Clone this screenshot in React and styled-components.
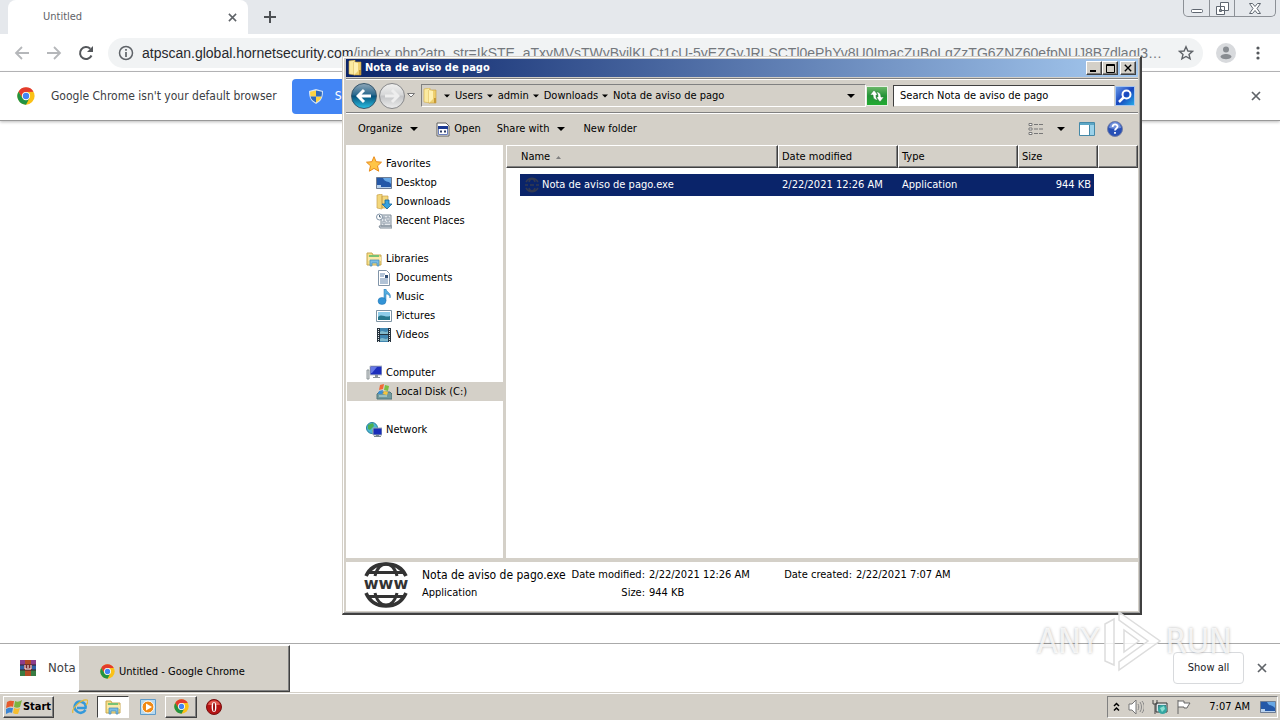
import React from 'react'
import styled, { createGlobalStyle } from 'styled-components'

const GlobalStyle = createGlobalStyle`
    * {
        box-sizing: border-box;
    }

    body {
        margin: 0;
        overflow: hidden;
        font-family: "DejaVu Sans Condensed", "Noto Sans", sans-serif;
        font-size: 11px;
        line-height: 14px;
        color: #000;
    }

    button, input {
        font: inherit;
        color: inherit;
        padding: 0;
        border: 0;
        background: none;
        outline: none;
        min-width: 0;
    }

    button {
        display: flex;
        align-items: center;
        justify-content: center;
        flex-shrink: 0;
    }

    svg {
        display: block;
        flex-shrink: 0;
    }
`;

const Desktop = styled.main`
    position: relative;
    display: flex;
    flex-direction: column;
    height: 100vh;
    background: #fff;
`;

/* ---------- browser ---------- */

const TabStrip = styled.header`
    display: flex;
    align-items: flex-end;
    height: 34px;
    padding-left: 8px;
    background: #e5e8ec;
`;

const Tab = styled.div`
    display: flex;
    align-items: center;
    justify-content: space-between;
    width: 240px;
    height: 34px;
    padding: 0 10px 0 35px;
    border-radius: 8px 8px 0 0;
    background: #fff;
    color: #5f6368;
`;

const NewTab = styled.button`
    width: 44px;
    height: 34px;
`;

const WindowControls = styled.div`
    display: flex;
    align-self: flex-start;
    height: 17px;
    margin: 0 4px 0 auto;
    border: 1px solid #8c9096;
    border-top: 0;
    border-radius: 0 0 5px 5px;
`;

const WindowControl = styled.button`
    width: ${props => props.$width}px;
    height: 16px;

    & + & {
        border-left: 1px solid #8c9096;
    }
`;

const Toolbar = styled.nav`
    display: flex;
    align-items: center;
    height: 38px;
    padding: 0 6px;
    border-bottom: 1px solid #b0b0b3;
`;

const ToolbarButton = styled.button`
    width: 32px;
    height: 32px;
`;

const AddressBar = styled.label`
    display: flex;
    flex: 1;
    align-items: center;
    height: 30px;
    margin: 0 7px 0 6px;
    padding: 0 9px 0 10px;
    border-radius: 15px;
    background: #f1f3f4;
    font-family: "Liberation Sans", sans-serif;
    font-size: 14px;
    line-height: 20px;
    color: #27292d;
`;

const Host = styled.span`
    padding-left: 8px;
`;

const UrlInput = styled.input`
    flex: 1;
    height: 24px;
    margin-right: 15px;
    color: #74787d;
    text-overflow: ellipsis;
`;

const InfoBar = styled.section`
    display: flex;
    align-items: center;
    height: 49px;
    padding: 0 18px 0 17px;
    border-bottom: 1px solid #999;
    box-shadow: 0 1px 3px #bbb;
    font-size: 12px;
    color: #3c4043;
`;

const InfoText = styled.span`
    padding: 0 15px 0 16px;
`;

const DefaultButton = styled.button`
    gap: 12px;
    height: 35px;
    padding: 0 17px;
    border-radius: 4px;
    background: #4285f4;
    color: #fff;
`;

const CloseButton = styled.button`
    width: 12px;
    height: 16px;
    margin-left: ${props => props.$push ? 'auto' : '0'};
`;

const Page = styled.div`
    flex: 1;
`;

const Shelf = styled.footer`
    display: flex;
    align-items: center;
    height: 49px;
    padding: 0 12px 0 20px;
    border-top: 1px solid #aaa;
    font-size: 13px;
    color: #3c4043;
`;

const Download = styled.button`
    gap: 12px;
`;

const ShowAll = styled.button`
    width: 71px;
    height: 32px;
    margin: 0 12px 0 auto;
    border: 1px solid #d8dadd;
    border-radius: 4px;
    font-size: 11px;
    color: #202124;
`;

/* ---------- explorer ---------- */

const Window = styled.section`
    position: absolute;
    left: 342px;
    top: 56px;
    display: flex;
    flex-direction: column;
    width: 800px;
    height: 559px;
    padding: 2px 2px 2px 3px;
    border: 1px solid #d4d0c8;
    border-right: 2px solid #404040;
    border-bottom: 2px solid #404040;
    background: #d4d0c8;
    box-shadow: inset 1px 1px #fff, inset -1px -1px #a0a0a0;
`;

const TitleBar = styled.header`
    display: flex;
    align-items: center;
    height: 18px;
    padding: 0 2px 0 1px;
    background: linear-gradient(to right, #0a246a, #a6caf0);
    color: #fff;
`;

const Title = styled.h1`
    flex: 1;
    margin: 0;
    padding-left: 2px;
    font-size: 11px;
    line-height: 14px;
    font-weight: bold;
`;

const CaptionButton = styled.button`
    width: 16px;
    height: 14px;
    margin-left: ${props => props.$gap ? '2px' : '0'};
    border: 1px solid;
    border-color: #fff #404040 #404040 #fff;
    background: #d4d0c8;
    box-shadow: inset -1px -1px #808080;
`;

const NavRow = styled.nav`
    display: flex;
    align-items: center;
    height: 35px;
    margin-top: 1px;
    border-top: 1px solid #808080;
    border-bottom: 1px solid #808080;
    box-shadow: inset 0 1px #fff, 0 1px #fff;
`;

const RoundButton = styled.button`
    width: 26px;
    height: 26px;
    margin-left: ${props => props.$active ? 5 : 2}px;
    border: 1px solid ${props => props.$active ? '#36566b' : '#87888a'};
    border-radius: 50%;
    background: ${props => props.$active
        ? 'linear-gradient(#8ba5b7, #28678c 46%, #075079 50%, #29bce0)'
        : 'linear-gradient(#f0f0ef, #d6d7d8 46%, #c2c3c5 50%, #ececec)'};
`;

const HistoryButton = styled.button`
    width: 12px;
    height: 20px;
`;

const Path = styled.div`
    display: flex;
    flex: 1;
    align-items: center;
    height: 23px;
    margin-left: 4px;
    padding-right: 10px;
    border: 1px solid;
    border-color: #808080 #fff #fff #808080;
`;

const Crumbs = styled.div`
    display: flex;
    flex: 1;
    gap: 4px;
    padding-left: 6px;
`;

const Crumb = styled.button`
    gap: 5px;
`;

const Spacer = styled.span`
    flex: 1;
`;

const GoButton = styled.button`
    width: 22px;
    height: 20px;
    margin-right: 5px;
    border: 1px solid #e7efe3;
    background: linear-gradient(#6ab668, #249437 50%, #22ab32);
`;

const SearchInput = styled.input`
    width: 222px;
    height: 22px;
    padding: 0 6px;
    border: 1px solid;
    border-color: #404040 #d4d0c8 #d4d0c8 #404040;
    background: #fff;

    &::placeholder {
        color: #000;
        opacity: 1;
    }
`;

const SearchButton = styled.button`
    width: 20px;
    height: 20px;
    margin-right: 3px;
    border: 1px solid #a7c5ed;
    background: linear-gradient(135deg, #6698e8, #1745bd 50%, #25a9e6);
`;

const CommandBar = styled.div`
    display: flex;
    align-items: center;
    height: 32px;
    padding: 0 15px 0 12px;
`;

const Command = styled.button`
    gap: ${props => props.$gap || 8}px;
    margin-right: ${props => props.$after || 0}px;
`;

const Panes = styled.div`
    display: flex;
    flex: 1;
    min-height: 0;
`;

const Sidebar = styled.aside`
    width: 157px;
    padding: 9px 0 0 1px;
    background: #fff;
`;

const Group = styled.ul`
    margin: 0 0 19px;
    padding: 0;
    list-style: none;
`;

const PlaceLink = styled.a`
    display: flex;
    align-items: center;
    gap: 4px;
    height: 19px;
    padding-left: ${props => props.$nested ? 29 : 19}px;
    background: ${props => props.$selected ? '#d4d0c8' : 'transparent'};
    color: #000;
    text-decoration: none;
`;

const FileList = styled.div`
    flex: 1;
    margin-left: 3px;
    background: #fff;
`;

const FileTable = styled.table`
    width: 100%;
    table-layout: fixed;
    border-spacing: 0;
`;

const HeadCell = styled.th`
    width: ${props => props.$width ? props.$width + 'px' : 'auto'};
    height: 23px;
    padding: 1px 0 0 ${props => props.$first ? 14 : 3}px;
    border: 1px solid;
    border-color: #fff #404040 #404040 #fff;
    background: #d4d0c8;
    box-shadow: inset -1px -1px #808080;
    font-weight: normal;
    text-align: left;
`;

const HeadLabel = styled.span`
    display: flex;
    align-items: center;
    gap: 6px;
`;

const FileCell = styled.td`
    padding: 6px ${props => props.$last ? 4 : 0}px 0 ${props => props.$first ? 14 : 0}px;
`;

const CellFill = styled.div`
    display: flex;
    align-items: center;
    justify-content: ${props => props.$right ? 'flex-end' : 'flex-start'};
    gap: 2px;
    height: 22px;
    padding: 0 ${props => props.$right ? 3 : 0}px 0 4px;
    background: #0a246a;
    color: #fff;
`;

const Details = styled.footer`
    display: flex;
    align-items: flex-start;
    gap: 13px;
    height: 49px;
    margin-top: 4px;
    padding-left: 17px;
    background: #fff;
`;

const Facts = styled.dl`
    display: grid;
    flex: 1;
    grid-template-columns: 145px 74px 131px 68px 1fr;
    gap: 4px;
    margin: 6px 0 0;
`;

const FactLabel = styled.dt`
    text-align: right;
    white-space: nowrap;
`;

const Fact = styled.dd`
    margin: 0;
    font-size: ${props => props.$large ? 12 : 11}px;
    white-space: nowrap;
`;

/* ---------- taskbar ---------- */

const Taskbar = styled.footer`
    position: relative;
    display: flex;
    align-items: center;
    height: 28px;
    padding: 0 2px 0 3px;
    border-top: 1px solid #d4d0c8;
    background: #d4d0c8;
    box-shadow: inset 0 1px #fff;
`;

const TaskButton = styled.button`
    gap: 1px;
    width: ${props => props.$width}px;
    height: 22px;
    margin-right: ${props => props.$after || 0}px;
    border: 1px solid;
    border-color: ${props => props.$pressed ? '#404040 #fff #fff #404040' : '#fff #404040 #404040 #fff'};
    background: ${props => props.$pressed ? '#fff' : '#d4d0c8'};
    box-shadow: ${props => props.$pressed ? 'none' : 'inset -1px -1px #808080'};
    font-weight: bold;
`;

const QuickButton = styled.button`
    width: 34px;
    height: 22px;
`;

const Tray = styled.div`
    display: flex;
    align-items: center;
    gap: 8px;
    height: 22px;
    margin-left: auto;
    padding: 0 1px 0 5px;
    border: 1px solid;
    border-color: #808080 #fff #fff #808080;
`;

const Clock = styled.time`
    padding: 0 2px 0 9px;
`;

const TaskPreview = styled.button`
    position: absolute;
    left: 78px;
    bottom: 28px;
    gap: 4px;
    justify-content: flex-start;
    width: 212px;
    height: 47px;
    padding: 6px 0 0 21px;
    border: 1px solid;
    border-color: #fff #404040 #404040 #fff;
    background: #d4d0c8;
    box-shadow: inset -1px -1px #808080;
`;

const Watermark = styled.div`
    position: absolute;
    right: 48px;
    bottom: 48px;
    display: flex;
    align-items: center;
    gap: 4px;
    font-size: 34px;
    line-height: 32px;
    color: rgba(255, 255, 255, 0.8);
    text-shadow: 0 0 3px rgba(0, 0, 0, 0.3);
    pointer-events: none;
`;

/* ---------- icons ---------- */

const Cross = ({ size = 10, color = '#5f6368' }) => (
    <svg width={size} height={size} viewBox="0 0 10 10" stroke={color} strokeWidth="1.7">
        <path d="M1 1l8 8M9 1l-8 8" />
    </svg>
)

const Caret = ({ size = 8 }) => (
    <svg width={size} height="4" viewBox="0 0 8 4"><path d="M0 0h8L4 4z" /></svg>
)

const ChromeIcon = ({ size = 16 }) => (
    <svg width={size} height={size} viewBox="0 0 48 48">
        <circle cx="24" cy="24" r="23" fill="#fbc116" />
        <path d="M4 12.500A23 23 0 0 1 44 12.500L24 13A11 11 0 0 0 14.500 29.500z" fill="#e33b2e" />
        <path d="M4 12.500A23 23 0 0 0 24 47L33.500 29.500A11 11 0 0 1 14.500 29.500z" fill="#229342" />
        <circle cx="24" cy="24" r="11" fill="#fff" />
        <circle cx="24" cy="24" r="8.500" fill="#4285f4" />
    </svg>
)

const ArrowIcon = ({ right, color = '#b5b7ba', size = 16, width = 1.8 }) => (
    <svg width={size} height={size} viewBox="0 0 16 16" fill="none" stroke={color} strokeWidth={width}>
        <path d={right ? 'M1 8h13M8 2l6 6-6 6' : 'M15 8H2M8 2L2 8l6 6'} />
    </svg>
)

const ReloadIcon = () => (
    <svg width="16" height="16" viewBox="0 0 16 16">
        <path d="M13.500 10.500A6 6 0 1 1 12.300 3.800" fill="none" stroke="#54575b" strokeWidth="2" />
        <path d="M15 1v6H9z" fill="#54575b" />
    </svg>
)

const InfoIcon = () => (
    <svg width="16" height="16" viewBox="0 0 16 16" fill="none" stroke="#5f6368" strokeWidth="1.500">
        <circle cx="8" cy="8" r="6.500" />
        <path d="M8 7v5M8 4v1.700" strokeWidth="1.700" />
    </svg>
)

const StarIcon = () => (
    <svg width="16" height="16" viewBox="0 0 16 16" fill="none" stroke="#5f6368" strokeWidth="1.400">
        <path d="M8 1.800l1.900 4.200 4.600.4-3.500 3 1.100 4.500L8 11.500l-4.100 2.400L5 9.400l-3.500-3L6.100 6z" />
    </svg>
)

const ProfileIcon = () => (
    <svg width="20" height="20" viewBox="0 0 20 20">
        <circle cx="10" cy="10" r="10" fill="#d8dadd" />
        <circle cx="10" cy="6.500" r="3" fill="#888c91" />
        <path d="M4.500 14c0-4 11-4 11 0-2 3-9 3-11 0z" fill="#888c91" />
    </svg>
)

const DotsIcon = () => (
    <svg width="4" height="14" viewBox="0 0 4 14" fill="#55585c">
        <circle cx="2" cy="2" r="1.600" /><circle cx="2" cy="7" r="1.600" /><circle cx="2" cy="12" r="1.600" />
    </svg>
)

const ShieldIcon = () => (
    <svg width="14" height="15" viewBox="0 0 14 15">
        <path d="M7 0l7 2c0 7-2 10-7 13C2 12 0 9 0 2z" fill="#d5e5f5" />
        <path d="M7 1.500v6H1.500c-.4-1.500-.4-3-.4-4.700zM7 7.500h5.500c-.7 2.700-2.500 4.600-5.500 6z" fill="#fdd344" />
        <path d="M7 1.500l5.900 1.300c0 1.700 0 3.200-.4 4.700H7zM1.500 7.500H7v6c-3-1.400-4.800-3.300-5.500-6z" fill="#2e69bd" />
    </svg>
)

const FolderIcon = () => (
    <svg width="16" height="16" viewBox="0 0 16 16">
        <path d="M2 1l6-1v15l-6-1z" fill="#fbeaa0" stroke="#d4ad45" strokeWidth=".6" />
        <path d="M7 2h7v13H7z" fill="#eed070" stroke="#c69a38" strokeWidth=".6" />
        <path d="M7 2l4 1v8l-4 4z" fill="#fff1b3" /><path d="M12 10h2v5h-2z" fill="#c89a36" />
    </svg>
)

const OpenIcon = () => (
    <svg width="14" height="15" viewBox="0 0 14 15">
        <path d="M1 1h9l3 3v10H1z" fill="#fff" stroke="#606060" />
        <path d="M2.500 4.500h9v8h-9z" fill="#fff" stroke="#6a7fbc" /><path d="M2 4h10v3H2z" fill="#1b3992" />
        <path d="M4 9.500h2m2 0h2M5 8v3M9 8v3" stroke="#303e68" />
    </svg>
)

const RefreshIcon = () => (
    <svg width="18" height="16" viewBox="0 0 18 16" fill="#fff">
        <path d="M6 2l4 5H8c0 3 1 4 2 5-4 0-5-2-5-5H2zM12 14L8 9h2c0-3-1-4-2-5 4 0 5 2 5 5h3z" stroke="#287c37" strokeWidth=".6" />
    </svg>
)

const SearchIcon = () => (
    <svg width="16" height="16" viewBox="0 0 16 16" fill="none" stroke="#fff" strokeWidth="2">
        <circle cx="9.500" cy="6.500" r="4" /><path d="M6.500 9.500L2 14" strokeWidth="2.500" />
    </svg>
)

const ViewIcon = () => (
    <svg width="16" height="14" viewBox="0 0 16 14" stroke="#777">
        <path d="M1 1.500h3v2H1zM1 6h3v2H1zM1 10.500h3v2H1z" fill="#fff" />
        <path d="M6 2.500h4m1 0h4M6 7h4m1 0h4M6 11.500h4m1 0h4" />
    </svg>
)

const PaneIcon = () => (
    <svg width="16" height="14" viewBox="0 0 16 14">
        <path d="M.5.500h15v13H.5z" fill="#fff" stroke="#4589a8" /><path d="M1 1h14v2H1z" fill="#5ca6c5" />
        <path d="M10.500 3v10" stroke="#4589a8" /><path d="M11 3h4v10h-4z" fill="#9bd2ea" />
    </svg>
)

const HelpIcon = () => (
    <svg width="16" height="16" viewBox="0 0 16 16">
        <circle cx="8" cy="8" r="7.500" fill="#2850b6" stroke="#7580a5" />
        <path d="M2 7a6 6 0 0 1 12 0C10 8 6 8 2 7z" fill="#7291db" />
        <path d="M5.600 6c0-3.400 5-3.200 5-.4C10.600 7.500 8 7.500 8 9.500M8 11v1.800" fill="none" stroke="#fff" strokeWidth="1.800" />
    </svg>
)

const GlobeIcon = () => (
    <svg width="46" height="46" viewBox="0 0 46 46" fill="none" stroke="#333" strokeWidth="3">
        <path d="M3 14C7 5 14 2 23 2s16 3 20 12M3 31c4 9 11 13 20 13s16-4 20-13" strokeWidth="3.600" />
        <path d="M12 14c2-8 6-12 11-12s9 4 11 12M12 31c2 8 6 12 11 12s9-4 11-12" />
        <path d="M6 10.500h34M5 34.500h36" />
        <text x="23" y="27" textAnchor="middle" fontFamily="DejaVu Sans" fontWeight="bold" fontSize="16" fill="#333" stroke="none">www</text>
    </svg>
)

const SmallGlobeIcon = () => (
    <svg width="16" height="16" viewBox="0 0 16 16" fill="none" stroke="#333a50" strokeWidth="1.500">
        <path d="M2 5c3-5 9-5 12 0M2 11c3 5 9 5 12 0M5 5c1-4 5-4 6 0M5 11c1 4 5 4 6 0M1 8h3m2 0h4m2 0h3" />
    </svg>
)

const icons = {
    star: <path d="M8 .7l2.100 5 5.400.5-4 3.600 1.200 5.400L8 12.400l-4.700 2.800 1.200-5.400-4-3.600 5.400-.5z" fill="#ffc547" stroke="#e88b1b" />,
    desktop: (
        <>
            <path d="M.5 2.500h15v11H.5z" fill="#2458a8" stroke="#6e7d94" />
            <path d="M7 3h8v6C12 5 9 8 7 3z" fill="#67a7e5" /><path d="M1 12h14v1H1zM1 10h4v2H1z" fill="#b8d1ed" />
        </>
    ),
    downloads: (
        <>
            <path d="M1 1l5-1v15l-5-1zM6 2h6v12H6z" fill="#f3d77c" stroke="#c9a24a" strokeWidth=".7" />
            <path d="M9 6h4v4h3l-5 5-5-5h3z" fill="#36a2df" stroke="#176499" strokeWidth=".8" />
        </>
    ),
    recent: (
        <>
            <path d="M5 2h10v11H5zM3 13h13v2H4z" fill="#e3e8ed" stroke="#7f8b97" />
            <path d="M7 4h2v2H7zm4 0h2v4h-2zM7 8h2v3H7zm3 2h4" fill="#fff" stroke="#8b98a6" />
            <circle cx="3.500" cy="4" r="3" fill="#fff" stroke="#8395a8" /><path d="M3.500 2v2H5" stroke="#536b80" fill="none" />
        </>
    ),
    libraries: (
        <>
            <path d="M1 2h5l1 2h8v10H1z" fill="#f5df86" stroke="#c9a850" />
            <path d="M3 4h10v3H3z" fill="#78c274" /><path d="M2 6h13v4H2z" fill="#fae9a8" />
            <path d="M4 15V9h9v6h-2v-3H6v3z" fill="#79bce4" stroke="#4389b8" strokeWidth=".7" />
        </>
    ),
    documents: (
        <>
            <path d="M2.500.5h8l3 3v12h-11z" fill="#fff" stroke="#8194a8" />
            <path d="M4 4h5M4 6h4M4 9h8M4 11h8M4 13h8" stroke="#6487ae" /><path d="M9 5h3v3H9z" fill="#2f4d72" />
        </>
    ),
    music: (
        <>
            <path d="M8 0h2c0 3 6 4 4 9 0-3-2-4-4-4v7H8z" fill="#55aee0" stroke="#2173b0" strokeWidth=".5" />
            <ellipse cx="6" cy="12" rx="4" ry="3.500" fill="#3293d6" stroke="#2173b0" strokeWidth=".5" />
        </>
    ),
    pictures: (
        <>
            <path d="M.5 2.500h15v11H.5z" fill="#fff" stroke="#7d94a5" />
            <path d="M2 4h12v8H2z" fill="#8fcde9" /><path d="M2 9c4-4 7 1 12-1v4H2z" fill="#28788d" />
        </>
    ),
    videos: (
        <>
            <path d="M1 1h14v14H1z" fill="#25323d" /><path d="M4 1h8v6H4zM4 8h8v7H4z" fill="#4186b0" />
            <path d="M4 5c3-3 5 2 8-1v3H4zm0 7c3-3 5 2 8-1v3H4z" fill="#80b9cb" />
            <path d="M2.500 2v13M13.500 2v13" stroke="#e5eaec" strokeDasharray="1 1" />
        </>
    ),
    computer: (
        <>
            <path d="M1 5h2v9H1z" fill="#d7dbdc" stroke="#8e9699" />
            <path d="M4 1h12v9H4z" fill="#1d2fbc" stroke="#b7bec4" /><path d="M5 2h6L6 8H5z" fill="#6578e6" />
            <path d="M9 10h3v2h2v1H7v-1h2z" fill="#8a949a" />
        </>
    ),
    disk: (
        <>
            <path d="M1 10l2-2h11l2 2v5H1z" fill="#71999d" stroke="#52777b" /><path d="M3 12h8" stroke="#c5e7df" />
            <path d="M4 1l4-1-1 5-4 1z" fill="#f26936" /><path d="M9 1l4 1-1 5-4-1z" fill="#7bbe43" />
            <path d="M3 7l4-1-1 4H2z" fill="#398fd8" /><path d="M8 7l4 1-1 3-4-1z" fill="#f6c53c" />
        </>
    ),
    network: (
        <>
            <circle cx="6" cy="6" r="5.500" fill="#4ab5d2" stroke="#27809c" />
            <path d="M2 3l5-2 1 3-4 4-2-1zM6 8l3 1-2 2z" fill="#4caf52" />
            <path d="M7 6h9v7H7z" fill="#182db9" stroke="#9ba8b3" /><path d="M10 13h3v1h2v1H8v-1h2z" fill="#77858e" />
        </>
    ),
    flag: (
        <>
            <path d="M1 3c3-2 5-1 7-1L7 8C5 7 3 8 0 9z" fill="#e65a2c" /><path d="M9 2c2 1 4 1 7-1l-2 7c-2 1-4 1-6 0z" fill="#7bb43f" />
            <path d="M0 10c3-2 5-1 7-1l-1 5c-2-1-4 0-6 1z" fill="#3a84d2" /><path d="M8 9c2 1 4 1 6 0l-2 6c-2 0-4 0-5-1z" fill="#f5bd2e" />
        </>
    ),
    ie: (
        <>
            <path d="M13.500 11C9 17 1 12 3 6c3-6 12-3 10.500 3H5" fill="none" stroke="#3399db" strokeWidth="2.500" />
            <path d="M1 14C-1 10 9 0 15 1c2 1 0 4-1 5" fill="none" stroke="#e5b936" strokeWidth="1.200" />
        </>
    ),
    player: (
        <>
            <path d="M.5.500h15v15H.5z" fill="#b7d9ef" stroke="#5e9bc9" />
            <circle cx="8" cy="8" r="6" fill="#f08a16" stroke="#fff" /><path d="M6 4.500v7L12 8z" fill="#fff" />
        </>
    ),
    opera: (
        <>
            <circle cx="8" cy="8" r="7.500" fill="#b51414" stroke="#781010" />
            <path d="M2 6C3 0 13 0 14 6z" fill="#e25a50" /><ellipse cx="8" cy="8" rx="2.400" ry="5" fill="#fff" />
            <ellipse cx="8" cy="8" rx="1" ry="4.500" fill="#9c1010" />
        </>
    ),
    rar: (
        <>
            <path d="M0 0h16v5H0z" fill="#8d3d8b" /><path d="M0 5h16v5H0z" fill="#315fa6" /><path d="M0 10h16v6H0z" fill="#397c43" />
            <path d="M5 0h6v16H5z" fill="#b34b24" /><path d="M0 5h16M0 10h16" stroke="#372028" />
            <path d="M4 5h8v5H4z" fill="#7c2329" /><path d="M5 5v4h6V5M8 5v3" fill="none" stroke="#fff" />
        </>
    ),
    speaker: (
        <>
            <path d="M1 5h3l4-4v14l-4-4H1z" fill="#fff" stroke="#777" />
            <path d="M10 5c1 2 1 4 0 6M12 3c2 3 2 7 0 10M14 2c3 4 3 8 0 12" fill="none" stroke="#888" />
        </>
    ),
    lan: (
        <>
            <path d="M4 4h11v9H4z" fill="#d8e4e7" stroke="#333" /><path d="M1 1v4h4V1M3 5v10" fill="none" stroke="#444" />
            <path d="M6 6h8v5H6z" fill="#42777e" /><circle cx="10.500" cy="10.500" r="4.500" fill="#35a7a2" />
            <path d="M8 9l4-2 1 3-3 3z" fill="#8adfd2" />
        </>
    ),
    action: <path d="M2 15V1M2 2h6v2h6l-2 3-1 2H8V8H2" fill="#fff" stroke="#666" />,
}

const Icon = ({ name }) => (
    <svg width="16" height="16" viewBox="0 0 16 16">{icons[name]}</svg>
)

/* ---------- data ---------- */

const places = [
    [['star', 'Favorites'], ['desktop', 'Desktop'], ['downloads', 'Downloads'], ['recent', 'Recent Places']],
    [['libraries', 'Libraries'], ['documents', 'Documents'], ['music', 'Music'], ['pictures', 'Pictures'], ['videos', 'Videos']],
    [['computer', 'Computer'], ['disk', 'Local Disk (C:)']],
    [['network', 'Network']],
]

const crumbs = ['Users', 'admin', 'Downloads', 'Nota de aviso de pago']

const urlPath = '/index.php?atp_str=IkSTE_aTxyMVsTWyByjlKLCt1cU-5yEZGyJRLSCTl0ePhYv8U0ImacZuBoLqZzTG6ZNZ60efpNUJ8B7dlagI3XeBI86...'

function Browser() {
    return (
        <>
            <TabStrip>
                <Tab>
                    Untitled
                    <CloseButton aria-label="Close tab"><Cross size={9} /></CloseButton>
                </Tab>
                <NewTab aria-label="New tab">
                    <svg width="12" height="12" stroke="#4d5054" strokeWidth="2"><path d="M6 0v12M0 6h12" /></svg>
                </NewTab>
                <WindowControls>
                    <WindowControl $width={25} aria-label="Minimize">
                        <svg width="12" height="12" fill="#fff" stroke="#5f6670"><rect x=".5" y="7.500" width="11" height="3" rx="1" /></svg>
                    </WindowControl>
                    <WindowControl $width={25} aria-label="Restore">
                        <svg width="13" height="13" fill="#fff" stroke="#5f6670"><path d="M4.500.5h8v8h-8zM.5 4.500h8v8h-8zM3.500 7.500h2v2h-2z" /></svg>
                    </WindowControl>
                    <WindowControl $width={41} aria-label="Close">
                        <svg width="12" height="11" fill="#fff" stroke="#5f6670"><path d="M.5.500h3L6 3.500l2.500-3h3L8 5.500l3.500 5h-3L6 7.500l-2.500 3h-3L4 5.500z" /></svg>
                    </WindowControl>
                </WindowControls>
            </TabStrip>
            <Toolbar>
                <ToolbarButton aria-label="Back"><ArrowIcon /></ToolbarButton>
                <ToolbarButton aria-label="Forward"><ArrowIcon right /></ToolbarButton>
                <ToolbarButton aria-label="Reload"><ReloadIcon /></ToolbarButton>
                <AddressBar>
                    <InfoIcon />
                    <Host>atpscan.global.hornetsecurity.com</Host>
                    <UrlInput defaultValue={urlPath} />
                    <StarIcon />
                </AddressBar>
                <ToolbarButton aria-label="Profile"><ProfileIcon /></ToolbarButton>
                <ToolbarButton aria-label="Menu"><DotsIcon /></ToolbarButton>
            </Toolbar>
            <InfoBar>
                <ChromeIcon size={18} />
                <InfoText>Google Chrome isn't your default browser</InfoText>
                <DefaultButton><ShieldIcon />Set as default</DefaultButton>
                <CloseButton $push aria-label="Dismiss"><Cross /></CloseButton>
            </InfoBar>
            <Page />
            <Shelf>
                <Download><Icon name="rar" />Nota</Download>
                <ShowAll>Show all</ShowAll>
                <CloseButton aria-label="Close downloads"><Cross /></CloseButton>
            </Shelf>
        </>
    )
}

function Explorer() {
    return (
        <Window>
            <TitleBar>
                <FolderIcon />
                <Title>Nota de aviso de pago</Title>
                <CaptionButton aria-label="Minimize"><svg width="8" height="8"><path d="M0 6h6v2H0z" /></svg></CaptionButton>
                <CaptionButton aria-label="Maximize"><svg width="9" height="9" fill="none" stroke="#000"><path d="M.5.500h8v8h-8zM0 1.500h9" /></svg></CaptionButton>
                <CaptionButton $gap aria-label="Close"><Cross size={8} color="#000" /></CaptionButton>
            </TitleBar>
            <NavRow>
                <RoundButton $active aria-label="Back"><ArrowIcon color="#fff" width={3} /></RoundButton>
                <RoundButton aria-label="Forward"><ArrowIcon right color="#eee" width={3} /></RoundButton>
                <HistoryButton aria-label="Recent pages">
                    <svg width="8" height="5" fill="#fff" stroke="#777"><path d="M.5.500h7L4 4z" /></svg>
                </HistoryButton>
                <Path>
                    <FolderIcon />
                    <Crumbs>
                        {crumbs.map(name => (
                            <Crumb key={name}><Caret size={6} />{name}</Crumb>
                        ))}
                    </Crumbs>
                    <Caret />
                </Path>
                <GoButton aria-label="Refresh"><RefreshIcon /></GoButton>
                <SearchInput aria-label="Search" placeholder="Search Nota de aviso de pago" />
                <SearchButton aria-label="Go"><SearchIcon /></SearchButton>
            </NavRow>
            <CommandBar>
                <Command $after={18}>Organize<Caret /></Command>
                <Command $gap={4} $after={16}><OpenIcon />Open</Command>
                <Command $after={18}>Share with<Caret /></Command>
                <Command>New folder</Command>
                <Spacer />
                <Command $gap={13} $after={14} aria-label="Views"><ViewIcon /><Caret /></Command>
                <Command $after={12} aria-label="Preview pane"><PaneIcon /></Command>
                <Command aria-label="Help"><HelpIcon /></Command>
            </CommandBar>
            <Panes>
                <Sidebar>
                    {places.map(group => (
                        <Group key={group[0][1]}>
                            {group.map(([icon, name], i) => (
                                <li key={name}>
                                    <PlaceLink href="#" $nested={i > 0} $selected={icon === 'disk'}>
                                        <Icon name={icon} />{name}
                                    </PlaceLink>
                                </li>
                            ))}
                        </Group>
                    ))}
                </Sidebar>
                <FileList>
                    <FileTable>
                        <thead>
                            <tr>
                                <HeadCell $first $width={272}>
                                    <HeadLabel>Name<svg width="5" height="3" fill="#808080"><path d="M0 3h5L2.500 0z" /></svg></HeadLabel>
                                </HeadCell>
                                <HeadCell $width={120}>Date modified</HeadCell>
                                <HeadCell $width={120}>Type</HeadCell>
                                <HeadCell $width={80}>Size</HeadCell>
                                <HeadCell />
                            </tr>
                        </thead>
                        <tbody>
                            <tr>
                                <FileCell $first><CellFill><SmallGlobeIcon />Nota de aviso de pago.exe</CellFill></FileCell>
                                <FileCell><CellFill>2/22/2021 12:26 AM</CellFill></FileCell>
                                <FileCell><CellFill>Application</CellFill></FileCell>
                                <FileCell $last><CellFill $right>944 KB</CellFill></FileCell>
                            </tr>
                        </tbody>
                    </FileTable>
                </FileList>
            </Panes>
            <Details>
                <GlobeIcon />
                <Facts>
                    <Fact $large>Nota de aviso de pago.exe</Fact>
                    <FactLabel>Date modified:</FactLabel>
                    <Fact>2/22/2021 12:26 AM</Fact>
                    <FactLabel>Date created:</FactLabel>
                    <Fact>2/22/2021 7:07 AM</Fact>
                    <Fact>Application</Fact>
                    <FactLabel>Size:</FactLabel>
                    <Fact>944 KB</Fact>
                </Facts>
            </Details>
        </Window>
    )
}

function StartBar() {
    return (
        <Taskbar>
            <TaskButton $width={51} $after={9}><Icon name="flag" />Start</TaskButton>
            <QuickButton aria-label="Internet Explorer"><Icon name="ie" /></QuickButton>
            <TaskButton $width={32} $after={2} $pressed aria-label="Explorer"><Icon name="libraries" /></TaskButton>
            <QuickButton aria-label="Media Player"><Icon name="player" /></QuickButton>
            <TaskButton $width={32} aria-label="Chrome"><ChromeIcon size={15} /></TaskButton>
            <QuickButton aria-label="Opera"><Icon name="opera" /></QuickButton>
            <Tray>
                <svg width="7" height="10" fill="none" stroke="#000" strokeWidth="1.500"><path d="M1 4l2.500-2.500L6 4M1 8.500L3.500 6 6 8.500" /></svg>
                <Icon name="speaker" />
                <Icon name="lan" />
                <Icon name="action" />
                <Clock>7:07 AM</Clock>
                <Icon name="desktop" />
            </Tray>
            <TaskPreview><ChromeIcon size={15} />Untitled - Google Chrome</TaskPreview>
        </Taskbar>
    )
}

export default function App() {
    return (
        <Desktop>
            <GlobalStyle />
            <Browser />
            <StartBar />
            <Explorer />
            <Watermark>
                ANY
                <svg width="58" height="62" viewBox="0 0 58 62" fill="none" stroke="#ddd" strokeWidth="1.500">
                    <path d="M2 14l9-5v46l-9-4zM16 2l41 29-41 29v-8l29-21-29-21zM21 20v22l15-11z" fill="rgba(255,255,255,.8)" />
                </svg>
                RUN
            </Watermark>
        </Desktop>
    )
}
